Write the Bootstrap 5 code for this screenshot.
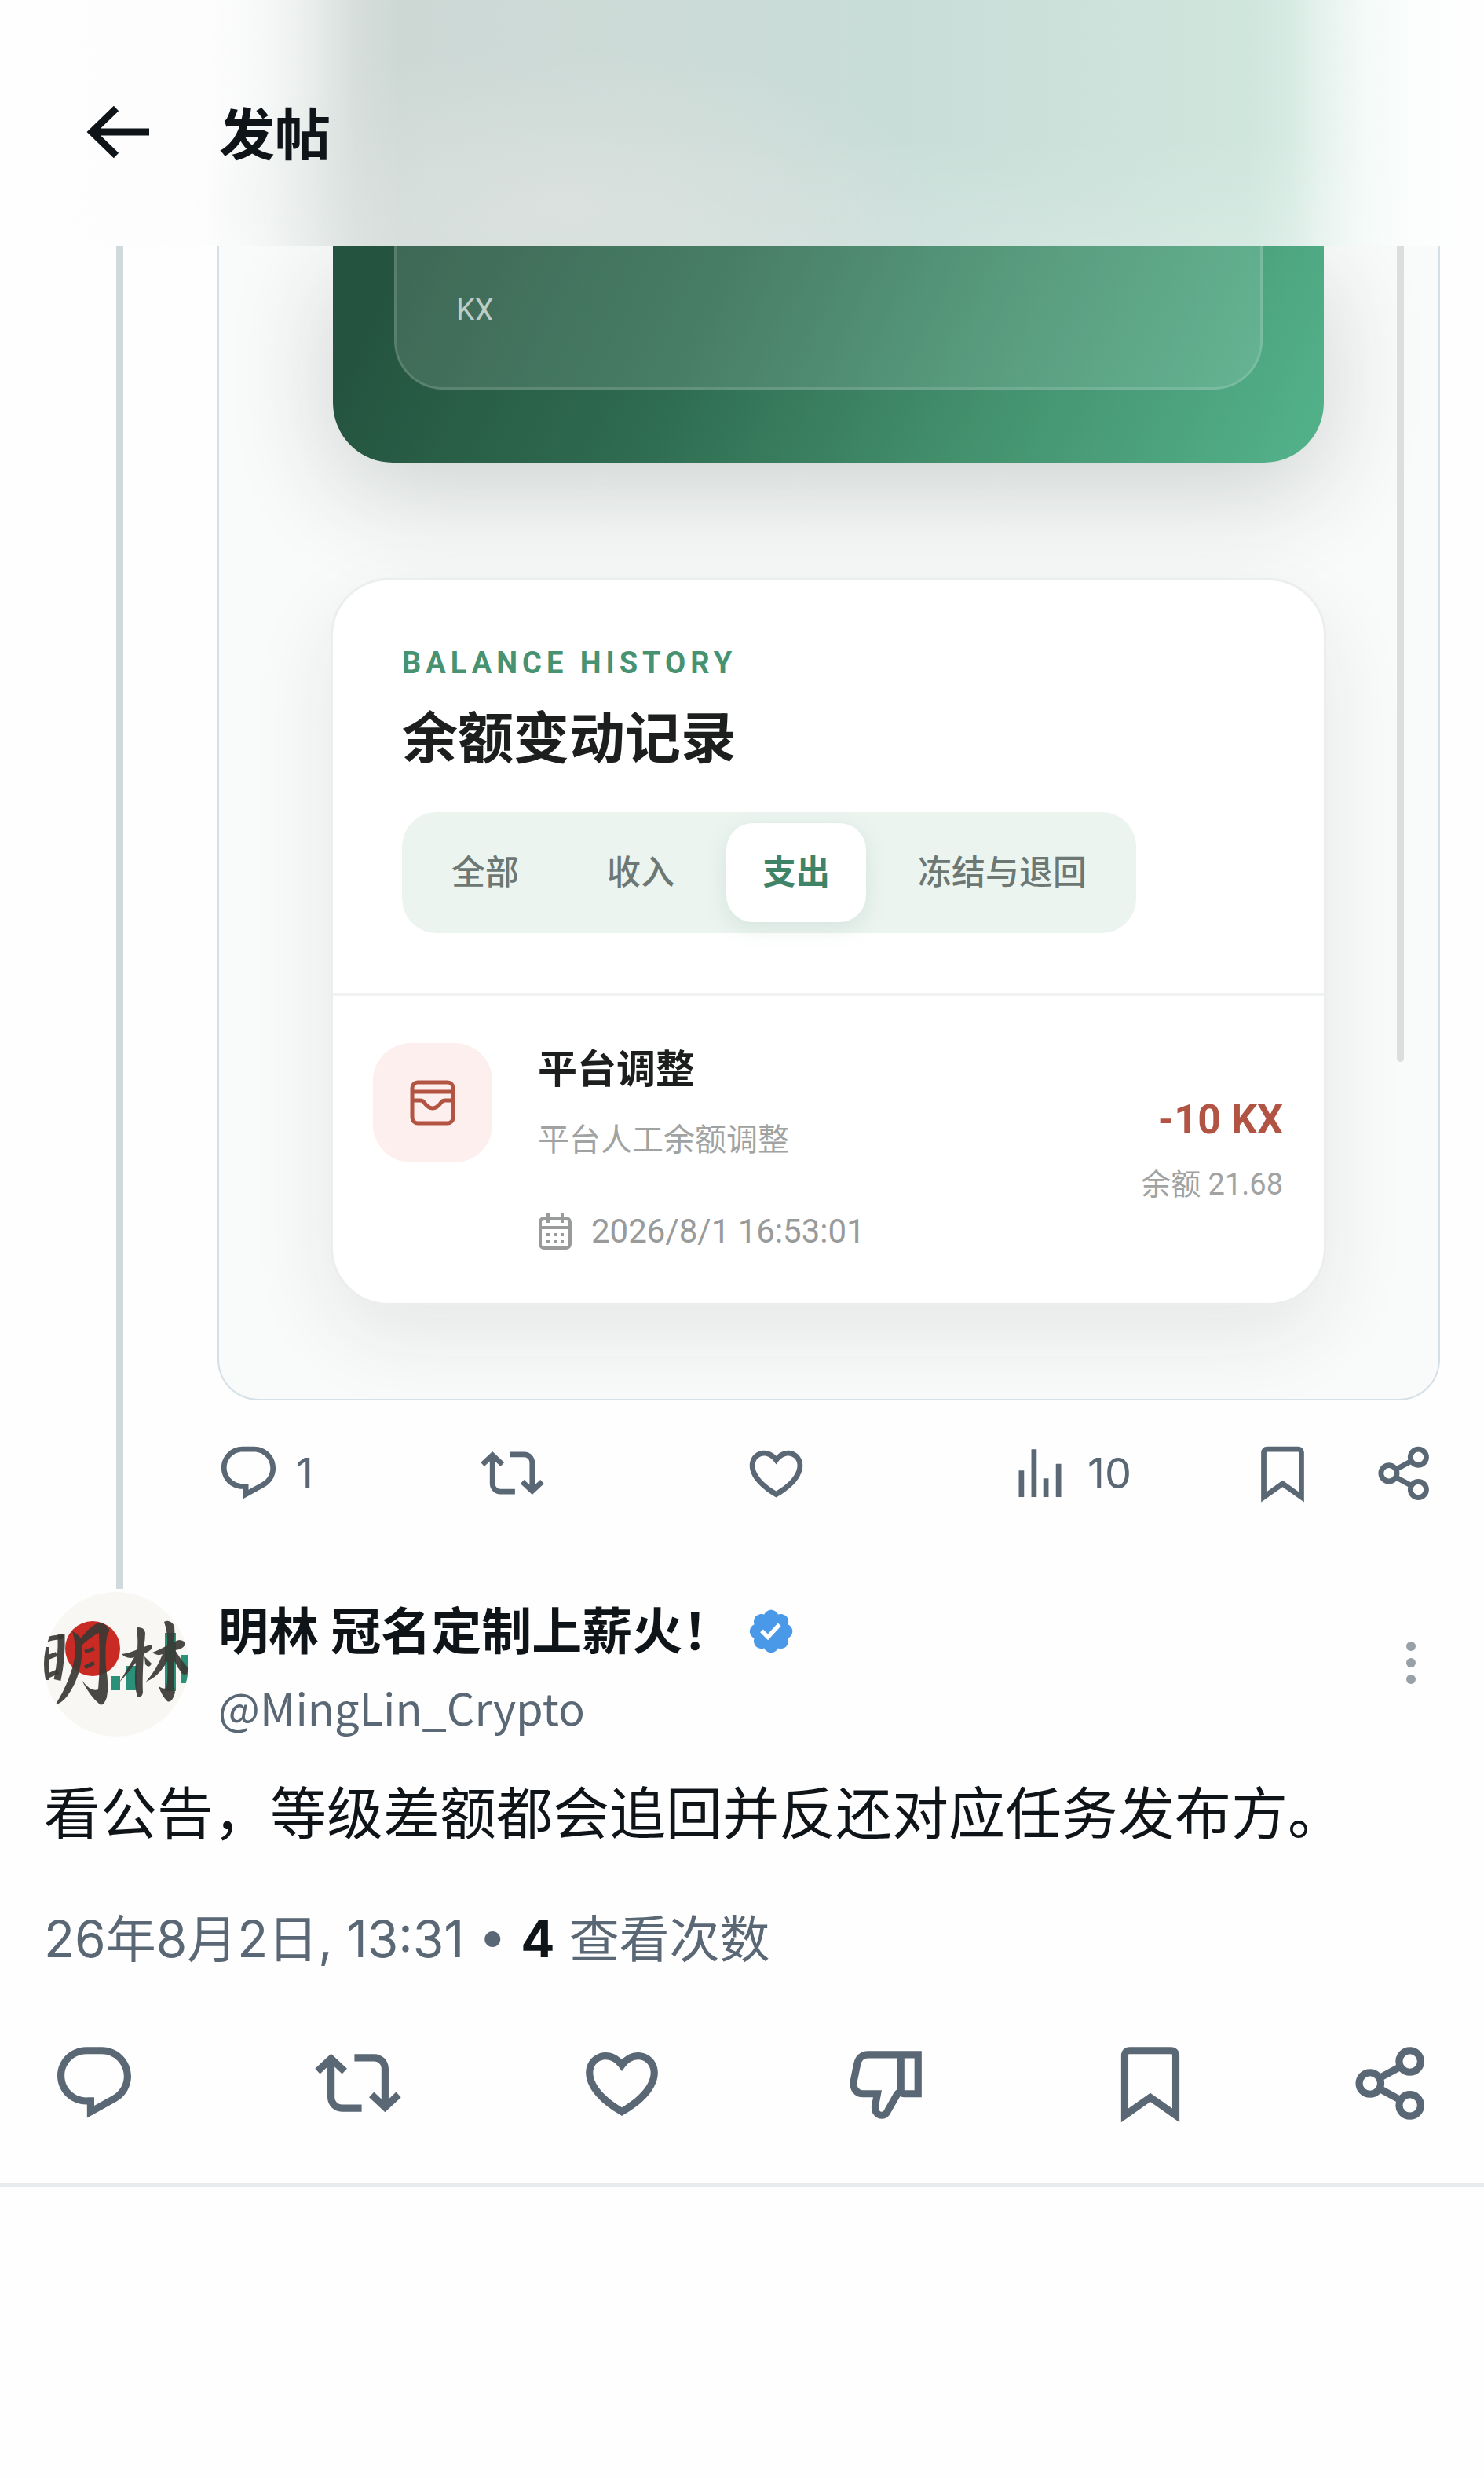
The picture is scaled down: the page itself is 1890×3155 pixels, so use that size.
<!DOCTYPE html>
<html lang="zh-CN">
<head>
<meta charset="utf-8">
<meta name="viewport" content="width=device-width, initial-scale=1">
<title>发帖</title>
<link href="https://cdn.jsdelivr.net/npm/bootstrap@5.3.0/dist/css/bootstrap.min.css" rel="stylesheet">
<style>
  :root { --ink: #0f1419; --slate: #5a6774; --rule: #cfd9de; --leaf: #3f8466; --brick: #b15443; }
  body { font-family: Inter, "Noto Sans CJK SC", sans-serif; color: var(--ink); background: #fefefe; }
  svg { display: block; flex: none; fill: currentColor; }
  a, a:hover { color: inherit; text-decoration: none; }
  .plain-btn { border: 0; padding: 0; background: none; color: inherit; line-height: 1; }

  /* top bar */
  .top-bar {
    height: 313px; padding: 28px 110px 0; gap: 89px;
    background:
      radial-gradient(480px 200px at 720px 260px, rgba(220,226,223,.8), rgba(220,226,223,0)),
      linear-gradient(to bottom, rgba(255,255,255,0) 55%, rgba(255,255,255,.14)),
      linear-gradient(to right, #fefefe 0, #fdfdfd 14%, #f6f8f7 18%, #e9edeb 21%, #d6dedb 24%, #cdd8d5 27%, #ccdbd7 45%, #c9ddd8 60%, #cce2da 75%, #cfe6dd 84%, #d7ebe3 87%, #e5f2ed 89%, #f4faf8 92%, #fcfefd 96%, #fefefe 100%);
  }
  .back-btn { margin-bottom: 6px; }
  .top-title { font-size: 71px; line-height: 80px; font-weight: 700; }

  /* thread */
  .thread-rail { width: 277px; flex: none; padding-left: 148px; }
  .thread-line { width: 9px; height: calc(100% - 4px); background: var(--rule); }
  .media-box {
    border: 2px solid #d5dfe6; border-top: 0; border-radius: 0 0 52px 52px;
    background: #f9fafa; padding: 0 146px 0 145px; height: 1470px;
  }
  .thread-body { padding-right: 56px; }
  .scroll-thumb { right: 44px; top: 0; width: 9px; height: 1039px; background: #dcdddd; border-radius: 0 0 5px 5px; }

  /* balance card */
  .hero-card {
    height: 276px; padding: 0 78px 93px; border-radius: 0 0 76px 76px;
    background: linear-gradient(115deg, #24533f 5%, #2e6b50 36%, #43906d 66%, #52b088 97%);
    box-shadow: 0 40px 130px rgba(35,60,50,.2);
  }
  .hero-inner {
    height: 183px; padding: 56px 76px; border: 3px solid rgba(255,255,255,.14); border-top: 0;
    border-radius: 0 0 62px 62px; background: rgba(255,255,255,.12);
    font-family: Roboto, sans-serif; font-size: 38px; line-height: 52px; color: rgba(255,255,255,.66);
  }

  /* history card */
  .history-card {
    margin: 147px -3px 0; border: 3px solid #eceeee; border-radius: 74px; background: #fff;
    box-shadow: 0 40px 110px rgba(30,40,35,.09); font-family: Roboto, "Noto Sans CJK SC", sans-serif;
  }
  .history-head { padding: 81px 88px 76px; border-bottom: 4px solid #f1f2f2; }
  .eyebrow { font-size: 38px; line-height: 48px; font-weight: 700; letter-spacing: 6px; color: #479270; }
  .history-title { font-size: 71px; line-height: 88px; font-weight: 700; color: #1c1f1e; margin: 29px 0 49px; }
  .seg { padding: 14px 17px; gap: 20px; border-radius: 44px; background: #ecf4f0; }
  .seg-btn { font-size: 43px; line-height: 64px; padding: 31px 46px; border: 0; border-radius: 34px; background: none; color: #6d7874; font-weight: 500; }
  .seg-btn.active { background: #fff; color: var(--leaf); font-weight: 700; box-shadow: 0 8px 28px rgba(63,132,102,.13); }
  .entry { padding: 60px 52px 0 51px; gap: 58px; height: 391px; }
  .tile { width: 152px; height: 152px; border-radius: 48px; background: #fdefed; color: var(--brick); }
  .entry-name { font-size: 50px; line-height: 60px; font-weight: 700; color: #1c1f1e; padding-top: 4px; }
  .entry-note { font-size: 40px; line-height: 60px; margin-top: 30px; color: #a0a3a2; }
  .entry-time { font-size: 42px; line-height: 60px; margin-top: 56px; gap: 24px; color: #989b9a; }
  .entry-sum { font-size: 52px; line-height: 64px; font-weight: 700; color: var(--brick); padding-top: 66px; }
  .entry-left { font-size: 38px; line-height: 48px; margin-top: 26px; color: #a0a3a2; }

  /* action rows */
  .acts { color: var(--slate); }
  .acts-sm { height: 81px; margin: 52px 6px 111px -1px; font-size: 54px; }
  .acts-sm .slot { flex: 0 0 21.65%; }
  .acts-sm .counted { gap: 20px; }
  .acts-sm .tail { gap: 73px; }
  .acts-lg { padding: 86px 65px 73px; }
  .acts-lg .slot { flex: 0 0 19.1%; }

  /* post */
  .post { padding: 0 56px; }
  .author { gap: 38px; }
  .author-name { font-size: 64px; line-height: 76px; font-weight: 700; gap: 17px; padding-top: 12px; }
  .handle { font-family: "Noto Sans CJK SC", sans-serif; font-size: 56px; line-height: 72px; color: var(--slate); margin-top: 22px; }
  .more { color: #97a1a9; margin-top: 60px; margin-right: 30px; }
  .post-text { font-size: 72px; line-height: 96px; margin: 50px 0 0; }
  .post-meta { font-size: 64px; line-height: 84px; margin-top: 70px; color: var(--slate); }
  .post-meta strong { color: var(--ink); font-weight: 700; }
  .end-rule { border-top: 4px solid #e8ebee; }
</style>
</head>
<body>

<svg class="d-none" aria-hidden="true">
  <symbol id="reply" viewBox="0 0 24 24"><path d="M1.751 10c0-4.42 3.584-8 8.005-8h4.366c4.49 0 8.129 3.64 8.129 8.13 0 2.96-1.607 5.68-4.196 7.11l-8.054 4.46v-3.69h-.067c-4.49.1-8.183-3.51-8.183-8.01zm8.005-6c-3.317 0-6.005 2.69-6.005 6 0 3.37 2.77 6.08 6.138 6.01l.351-.01h1.761v2.3l5.087-2.81c1.951-1.08 3.163-3.13 3.163-5.36 0-3.39-2.744-6.13-6.129-6.13H9.756z"/></symbol>
  <symbol id="repost" viewBox="0 0 24 24"><path d="M4.5 3.88l4.432 4.14-1.364 1.46L5.5 7.55V16c0 1.1.896 2 2 2H13v2H7.5c-2.209 0-4-1.79-4-4V7.55L1.432 9.48.068 8.02 4.5 3.88zM16.5 6H11V4h5.5c2.209 0 4 1.79 4 4v8.45l2.068-1.93 1.364 1.46-4.432 4.14-4.432-4.14 1.364-1.46 2.068 1.93V8c0-1.1-.896-2-2-2z"/></symbol>
  <symbol id="like" viewBox="0 0 24 24"><path d="M16.697 5.5c-1.222-.06-2.679.51-3.89 2.16l-.805 1.09-.806-1.09C9.984 6.01 8.526 5.44 7.304 5.5c-1.243.07-2.349.78-2.91 1.91-.552 1.12-.633 2.78.479 4.82 1.074 1.97 3.257 4.27 7.129 6.61 3.87-2.34 6.052-4.64 7.126-6.61 1.111-2.04 1.03-3.7.477-4.82-.561-1.13-1.666-1.84-2.908-1.91zm4.187 7.69c-1.351 2.48-4.001 5.12-8.379 7.67l-.503.3-.504-.3c-4.379-2.55-7.029-5.19-8.382-7.67-1.36-2.5-1.41-4.86-.514-6.67.887-1.79 2.647-2.91 4.601-3.01 1.651-.09 3.368.56 4.798 2.01 1.429-1.45 3.146-2.1 4.796-2.01 1.954.1 3.714 1.22 4.601 3.01.896 1.81.846 4.17-.514 6.67z"/></symbol>
  <symbol id="views" viewBox="0 0 24 24"><path d="M8.75 21V3h2v18h-2zM18 21V8.5h2V21h-2zM4 21l.004-10h2L6 21H4zm9.248 0v-7h2v7h-2z"/></symbol>
  <symbol id="save" viewBox="0 0 24 24"><path d="M3.900 4.300C3.900 3 4.900 2 6.200 2h11.600c1.300 0 2.300 1 2.300 2.300v18.640L12 17.230 3.900 22.940V4.300zM6.200 4c-.2 0-.3.100-.3.300v14.800l6.100-4.330 6.100 4.330V4.300c0-.2-.1-.3-.3-.3H6.200z"/></symbol>
  <symbol id="share" viewBox="0 0 24 24"><g fill="none" stroke="currentColor" stroke-width="2"><circle cx="6.500" cy="12.100" r="3"/><circle cx="17.600" cy="6" r="3"/><circle cx="17.600" cy="18.200" r="3"/><path d="M9.100 10.650l5.900-3.200M9.100 13.550l5.900 3.200"/></g></symbol>
  <symbol id="dislike" viewBox="0 0 24 24"><path fill="none" stroke="currentColor" stroke-width="2" d="M21 4.100H7.100C5.500 4.100 4.400 5.100 4.100 6.700L3.100 11.500C2.800 13.500 3.900 15 5.700 15H9.700L9.100 18.200C8.800 19.900 9.700 21 10.900 21 11.900 21 12.400 20.300 12.700 19.500L15.200 15.100C15.800 14.200 16.400 15 17.200 15H21zM16.200 4.100V14.200"/></symbol>
</svg>

<header class="top-bar d-flex align-items-center">
  <button class="plain-btn back-btn" aria-label="返回">
    <svg width="80" height="68" viewBox="0 0 80 68"><path d="M38 4 7 34l31 30M8 34h72" fill="none" stroke="currentColor" stroke-width="9"/></svg>
  </button>
  <h1 class="top-title mb-0">发帖</h1>
</header>

<main>
  <article class="d-flex">
    <div class="thread-rail"><div class="thread-line"></div></div>
    <div class="thread-body flex-grow-1">
      <div class="media-box position-relative overflow-hidden">
        <div class="hero-card"><div class="hero-inner">KX</div></div>

        <section class="history-card">
          <div class="history-head">
            <div class="eyebrow">BALANCE HISTORY</div>
            <h2 class="history-title">余额变动记录</h2>
            <div class="seg d-inline-flex align-top">
              <button class="seg-btn">全部</button>
              <button class="seg-btn">收入</button>
              <button class="seg-btn active">支出</button>
              <button class="seg-btn">冻结与退回</button>
            </div>
          </div>
          <div class="entry d-flex">
            <div class="tile d-flex align-items-center justify-content-center flex-shrink-0">
              <svg width="60" height="60" viewBox="0 0 60 60"><g fill="none" stroke="currentColor" stroke-width="5" stroke-linejoin="round"><rect x="4" y="4" width="52" height="52" rx="7"/><path d="M4 16h52M4 27h10c5 0 5 3 7 5 3 3 5 5 9 5s6-2 9-5c2-2 2-5 7-5h10"/></g></svg>
            </div>
            <div class="flex-grow-1">
              <div class="entry-name">平台调整</div>
              <div class="entry-note">平台人工余额调整</div>
              <div class="entry-time d-flex align-items-center">
                <svg width="44" height="48" viewBox="0 0 44 48"><g fill="none" stroke="currentColor" stroke-width="4" stroke-linejoin="round"><rect x="3" y="7" width="38" height="38" rx="5"/><path d="M3 19h38M13 1v12M31 1v12"/></g><path d="M11 26h4v4h-4zM20 26h4v4h-4zM29 26h4v4h-4zM11 35h4v4h-4zM20 35h4v4h-4zM29 35h4v4h-4z"/></svg>
                <span>2026/8/1 16:53:01</span>
              </div>
            </div>
            <div class="text-end">
              <div class="entry-sum">-10 KX</div>
              <div class="entry-left">余额 21.68</div>
            </div>
          </div>
        </section>
        <div class="scroll-thumb position-absolute"></div>
      </div>

      <div class="acts acts-sm d-flex align-items-center">
        <button class="plain-btn slot counted d-flex align-items-center"><svg width="81" height="81"><use href="#reply"/></svg><span>1</span></button>
        <button class="plain-btn slot d-flex" aria-label="转帖"><svg width="81" height="81"><use href="#repost"/></svg></button>
        <button class="plain-btn slot d-flex" aria-label="喜欢"><svg width="81" height="81"><use href="#like"/></svg></button>
        <a href="#" class="counted d-flex align-items-center"><svg width="81" height="81"><use href="#views"/></svg><span>10</span></a>
        <div class="tail d-flex ms-auto">
          <button class="plain-btn" aria-label="书签"><svg width="81" height="81"><use href="#save"/></svg></button>
          <button class="plain-btn" aria-label="分享"><svg width="81" height="81"><use href="#share"/></svg></button>
        </div>
      </div>
    </div>
  </article>

  <article>
    <div class="post">
      <div class="author d-flex align-items-start">
        <svg width="184" height="184" viewBox="0 0 184 184" role="img" aria-label="明林">
          <clipPath id="round"><circle cx="92" cy="92" r="92"/></clipPath>
          <g clip-path="url(#round)">
            <rect width="184" height="184" fill="#f8f7f4"/>
            <circle cx="62" cy="72" r="35" fill="#c92a24"/>
            <path fill="#2b9078" d="M85 107h12v18H85zM104 94h14v31h-14zM154 52h14v74h-14zM175 80h9v36h-9z"/>
            <g fill="none" stroke="#3b3834" stroke-opacity=".92" stroke-linejoin="round">
              <path stroke-width="6" stroke-linecap="round" d="M-2 62 Q10 58 22 57"/>
              <path stroke-width="9" d="M22 54 Q23 84 17 112"/>
              <path stroke-width="6" d="M3 70V112M3 84 16 79M2 108 18 101"/>
              <path stroke-width="5" d="M52 76 64 72M52 96 64 90"/>
            </g>
            <g fill="#3b3834" fill-opacity=".92">
              <path d="M36 50 Q46 54 49 64 Q50 104 30 132 Q22 142 15 143 Q34 112 39 84 Q41 64 36 50z"/>
              <path d="M46 60 Q60 42 70 39 Q84 42 83 50 Q77 58 79 96 Q83 120 80 134 Q76 146 71 143 Q58 132 48 112 Q60 128 69 124 Q72 92 70 52 Q58 58 48 68z"/>
              <path d="M118 45 Q128 44 129 52 Q129 60 127 70 L136 67 Q140 71 134 75 L127 79 Q125 112 126 128 Q124 136 119 133 Q114 118 117 90 Q108 102 96 115 Q106 98 115 83 Q106 86 99 79 Q108 78 119 73 Q120 60 118 45z"/>
              <path d="M128 82 137 91 Q134 98 129 92z"/>
              <path d="M153 38 Q160 34 166 43 Q167 54 166 64 Q172 58 180 64 Q180 72 167 74 Q174 86 183 96 Q184 108 176 104 Q170 96 166 88 Q165 118 167 128 Q163 142 157 139 Q150 132 146 120 Q152 124 156 122 Q158 108 157 88 Q146 108 130 114 Q144 98 151 79 Q144 82 138 77 Q146 74 157 68 Q158 52 153 38z"/>
            </g>
          </g>
        </svg>
        <div class="flex-grow-1">
          <div class="author-name d-flex align-items-center">
            <a href="#">明林 冠名定制上薪火！</a>
            <svg width="64" height="64" viewBox="0 0 22 22" role="img" aria-label="已认证"><path fill="#4a99e9" d="M20.400 11c-.02-.65-.22-1.270-.57-1.810-.35-.54-.84-.97-1.430-1.240.22-.6.270-1.260.140-1.890-.13-.64-.44-1.220-.88-1.690-.47-.44-1.050-.75-1.690-.88-.63-.13-1.290-.08-1.890.140-.27-.59-.7-1.080-1.240-1.430C12.300 1.850 11.670 1.660 11.020 1.650c-.65.01-1.270.2-1.810.55-.54.35-.97.84-1.230 1.430-.6-.22-1.270-.27-1.900-.14-.64.13-1.220.44-1.690.88-.45.47-.75 1.050-.88 1.690-.13.63-.08 1.290.15 1.890-.59.27-1.090.7-1.440 1.240-.35.54-.54 1.160-.56 1.810.02.650.210 1.270.560 1.810.350.540.850.970 1.440 1.240-.23.600-.28 1.260-.15 1.890.130.640.430 1.220.880 1.690.470.440 1.050.750 1.690.880.630.130 1.290.080 1.890-.14.270.590.700 1.080 1.240 1.430.540.350 1.160.540 1.810.560.650-.02 1.270-.21 1.810-.56.540-.35.970-.84 1.240-1.430.600.230 1.260.280 1.890.140.640-.13 1.220-.43 1.690-.88.450-.47.750-1.050.880-1.690.130-.63.080-1.290-.14-1.890.590-.27 1.080-.7 1.430-1.240.350-.54.550-1.160.570-1.810z"/><path fill="#fff" d="M9.660 14.850l-3.430-3.430 1.300-1.300 2.070 2.070 4.400-4.790 1.350 1.250z"/></svg>
          </div>
          <div class="handle">@MingLin_Crypto</div>
        </div>
        <button class="plain-btn more" aria-label="更多"><svg width="14" height="60" viewBox="0 0 14 60"><circle cx="7" cy="9" r="6"/><circle cx="7" cy="30" r="6"/><circle cx="7" cy="51" r="6"/></svg></button>
      </div>
      <p class="post-text">看公告，等级差额都会追回并反还对应任务发布方。</p>
      <div class="post-meta">26年8月2日, 13:31 • <strong>4</strong> 查看次数</div>
    </div>
    <div class="acts acts-lg d-flex">
      <button class="plain-btn slot d-flex" aria-label="回复"><svg width="110" height="110"><use href="#reply"/></svg></button>
      <button class="plain-btn slot d-flex" aria-label="转帖"><svg width="110" height="110"><use href="#repost"/></svg></button>
      <button class="plain-btn slot d-flex" aria-label="喜欢"><svg width="110" height="110"><use href="#like"/></svg></button>
      <button class="plain-btn slot d-flex" aria-label="不喜欢"><svg width="110" height="110"><use href="#dislike"/></svg></button>
      <button class="plain-btn" aria-label="书签"><svg width="110" height="110"><use href="#save"/></svg></button>
      <button class="plain-btn ms-auto" aria-label="分享"><svg width="110" height="110"><use href="#share"/></svg></button>
    </div>
    <div class="end-rule"></div>
  </article>
</main>
<script src="https://cdn.jsdelivr.net/npm/bootstrap@5.3.0/dist/js/bootstrap.bundle.min.js"></script>
</body>
</html>
